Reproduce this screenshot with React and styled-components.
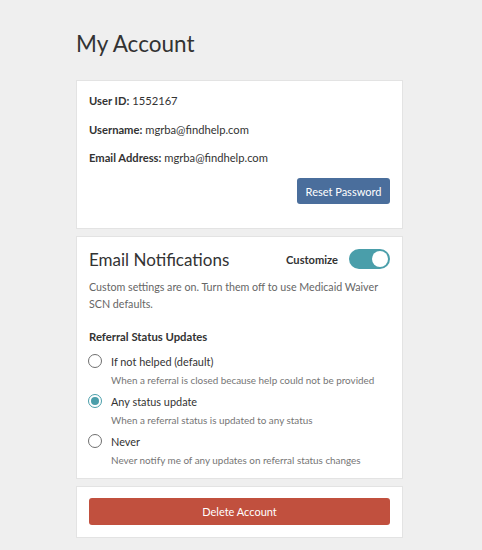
import React, { useState } from 'react'
import styled, { createGlobalStyle } from 'styled-components'

const GlobalStyle = createGlobalStyle`
  html, body {
    margin: 0;
    padding: 0;
    background: #efefef;
    font-family: Lato, "Liberation Sans", sans-serif;
    color: #333;
  }
`

const Page = styled.div`
  width: 327px;
  margin-left: 76px;
  padding: 29px 0 12px 0;
`

const Title = styled.h1`
  font-size: 22.5px;
  font-weight: 400;
  line-height: 30px;
  margin: 0 0 21px 0;
  color: #333;
`

const Card = styled.section`
  box-sizing: border-box;
  background: #fff;
  border: 1px solid #e3e3e3;
  padding: ${p => p.$pad || '12px'};
  margin-bottom: 7px;
`

const InfoRow = styled.div`
  font-size: 11.2px;
  line-height: 28.5px;
  color: #333;
  b { font-weight: 700; }
`

const Actions = styled.div`
  display: flex;
  justify-content: flex-end;
  margin-top: 5.5px;
`

const Button = styled.button`
  box-sizing: border-box;
  font-family: inherit;
  font-size: 11px;
  white-space: nowrap;
  color: #fff;
  background: ${p => p.$bg};
  border: none;
  border-radius: 3px;
  height: ${p => p.$h || 26}px;
  padding: 0;
  width: ${p => (p.$full ? '100%' : '93px')};
  cursor: pointer;
`

const Header = styled.div`
  display: flex;
  align-items: center;
  justify-content: space-between;
  height: 24px;
  margin-bottom: 6.5px;
`

const Heading = styled.h2`
  font-size: 17px;
  font-weight: 400;
  margin: 0;
  color: #333;
`

const ToggleWrap = styled.label`
  display: flex;
  align-items: center;
  gap: 11px;
  font-size: 11.1px;
  font-weight: 700;
  color: #333;
  cursor: pointer;
`

const Track = styled.span`
  width: 41px;
  height: 20px;
  border-radius: 10px;
  background: ${p => (p.$on ? '#4a9eaa' : '#bbb')};
  display: flex;
  align-items: center;
  justify-content: ${p => (p.$on ? 'flex-end' : 'flex-start')};
  padding: 0 2px;
  box-sizing: border-box;
`

const Knob = styled.span`
  width: 16px;
  height: 16px;
  border-radius: 50%;
  background: #fff;
`

const Desc = styled.p`
  font-size: 10.7px;
  line-height: 17px;
  color: #666;
  margin: 0 0 17.5px 0;
`

const Sub = styled.h3`
  font-size: 11.3px;
  line-height: 16px;
  font-weight: 700;
  margin: 0 0 7.5px 0;
  color: #333;
`

const Option = styled.label`
  display: grid;
  grid-template-columns: 22px 1fr;
  align-items: center;
  margin-bottom: 5px;
  cursor: pointer;
`

const Radio = styled.span`
  width: 14px;
  height: 14px;
  border-radius: 50%;
  border: 1px solid ${p => (p.$checked ? '#4a9eaa' : '#6f6f6f')};
  box-sizing: border-box;
  display: flex;
  align-items: center;
  justify-content: center;
  margin-left: -1px;
  &::after {
    content: '';
    width: 8px;
    height: 8px;
    border-radius: 50%;
    background: ${p => (p.$checked ? '#4a9eaa' : 'transparent')};
  }
`

const OptLabel = styled.div`
  font-size: 10.9px;
  line-height: 17px;
  color: #333;
`

const OptHint = styled.div`
  grid-column: 2;
  font-size: 9.9px;
  line-height: 15px;
  color: #757575;
  margin-top: 3px;
`

const options = [
  { id: 'nothelped', label: 'If not helped (default)', hint: 'When a referral is closed because help could not be provided' },
  { id: 'any', label: 'Any status update', hint: 'When a referral status is updated to any status' },
  { id: 'never', label: 'Never', hint: 'Never notify me of any updates on referral status changes' },
]

const App = () => {
  const [custom, setCustom] = useState(true)
  const [choice, setChoice] = useState('any')

  return (
    <>
      <GlobalStyle />
      <Page>
        <Title>My Account</Title>

        <Card $pad="6px 12px 24px 12px">
          <InfoRow><b>User ID:</b> 1552167</InfoRow>
          <InfoRow><b>Username:</b> mgrba@findhelp.com</InfoRow>
          <InfoRow><b>Email Address:</b> mgrba@findhelp.com</InfoRow>
          <Actions>
            <Button $bg="#4a6e9c">Reset Password</Button>
          </Actions>
        </Card>

        <Card $pad="10px 12px 5.5px 12px">
          <Header>
            <Heading>Email Notifications</Heading>
            <ToggleWrap onClick={() => setCustom(!custom)}>
              Customize
              <Track $on={custom}><Knob /></Track>
            </ToggleWrap>
          </Header>
          <Desc>Custom settings are on. Turn them off to use Medicaid Waiver SCN defaults.</Desc>
          <Sub>Referral Status Updates</Sub>
          {options.map(o => (
            <Option key={o.id} onClick={() => setChoice(o.id)}>
              <Radio $checked={choice === o.id} />
              <OptLabel>{o.label}</OptLabel>
              <OptHint>{o.hint}</OptHint>
            </Option>
          ))}
        </Card>

        <Card $pad="11px 12px 12px 12px">
          <Button $bg="#c1503e" $h={27} $full>Delete Account</Button>
        </Card>
      </Page>
    </>
  )
}

export default App
